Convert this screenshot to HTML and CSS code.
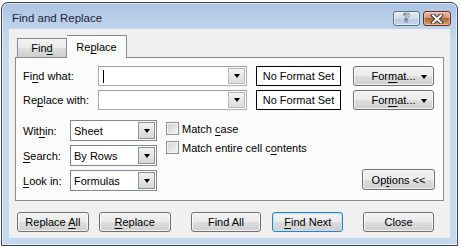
FILE: index.html
```html
<!DOCTYPE html>
<html lang="en">
<head>
    <meta charset="UTF-8">
    <title>Find and Replace</title>
    <link rel="stylesheet" href="styles.css">
</head>
<body>
    <div class="window">
        <div class="titlebar">
            <span class="title">Find and Replace</span>
            <div class="caption-btns">
                <div class="cap help">?</div>
                <div class="cap close">
                    <svg width="14" height="10" viewBox="0 0 14 10">
                        <path d="M3 1.5L11 8.5M11 1.5L3 8.5" stroke="#3a3a3a" stroke-width="4" stroke-linecap="square"/>
                        <path d="M3 1.5L11 8.5M11 1.5L3 8.5" stroke="#fff" stroke-width="2" stroke-linecap="square"/>
                    </svg>
                </div>
            </div>
        </div>

        <div class="client">
            <div class="tabs">
                <div class="tab"><span>Fin<u>d</u></span></div>
                <div class="tab active"><span>Re<u>p</u>lace</span></div>
            </div>

            <div class="panel">
                <div class="find-row">
                    <span class="label wide">Fi<u>n</u>d what:</span>
                    <div class="combo"><span class="caret"></span><span class="combo-arrow"><i class="tri"></i></span></div>
                    <div class="format-box">No Format Set</div>
                    <div class="btn format"><span>For<u>m</u>at...</span><i class="tri"></i></div>
                </div>
                <div class="find-row">
                    <span class="label wide">Re<u>p</u>lace with:</span>
                    <div class="combo"><span class="combo-arrow"><i class="tri"></i></span></div>
                    <div class="format-box">No Format Set</div>
                    <div class="btn format"><span>For<u>m</u>at...</span><i class="tri"></i></div>
                </div>

                <div class="options">
                    <div class="selects">
                        <span class="label">Wit<u>h</u>in:</span>
                        <div class="select"><span>Sheet</span><span class="select-arrow"><i class="tri"></i></span></div>
                        <span class="label"><u>S</u>earch:</span>
                        <div class="select"><span>By Rows</span><span class="select-arrow"><i class="tri"></i></span></div>
                        <span class="label"><u>L</u>ook in:</span>
                        <div class="select"><span>Formulas</span><span class="select-arrow"><i class="tri"></i></span></div>
                    </div>
                    <div class="checks">
                        <div class="check"><span class="box"></span><span>Match <u>c</u>ase</span></div>
                        <div class="check"><span class="box"></span><span>Match entire cell c<u>o</u>ntents</span></div>
                    </div>
                    <div class="btn opt"><span>Op<u>t</u>ions &lt;&lt;</span></div>
                </div>
            </div>

            <div class="actions">
                <div class="btn act"><span>Replace <u>A</u>ll</span></div>
                <div class="btn act"><span><u>R</u>eplace</span></div>
                <div class="btn act gap-l"><span>Find All</span></div>
                <div class="btn act focus"><span><u>F</u>ind Next</span></div>
                <div class="btn act gap-l"><span>Close</span></div>
            </div>
        </div>
    </div>
</body>
</html>
```

FILE: styles.css
```css
* {
    box-sizing: border-box;
}

body {
    margin: 0;
    padding: 2px 0 0 1px;
    background: #fff;
    font-family: 'Liberation Sans', Arial, sans-serif;
    font-size: 11px;
    color: #000;
}

u {
    text-decoration-thickness: 1px;
    text-underline-offset: 2px;
}

.window {
    width: 457px;
    height: 244px;
    border: 1px solid #3b4452;
    border-radius: 7px 7px 0 0;
    background: linear-gradient(#a9c3e1 0px, #bcd2ea 20px, #c4d8ee 40px, #c4d8ee 100%);
    box-shadow: inset 0 0 0 1px rgba(255, 255, 255, 0.55);
    display: flex;
    flex-direction: column;
}

.titlebar {
    height: 26px;
    display: flex;
    justify-content: space-between;
    padding: 8px 6px 0 10px;
}

.title {
    color: #1f1d3d;
    font-size: 11.5px;
    line-height: 14px;
}

.caption-btns {
    display: flex;
    gap: 3px;
}

.cap {
    height: 15px;
    border-radius: 3px;
    display: flex;
    align-items: center;
    justify-content: center;
}

.help {
    width: 27px;
    border: 1px solid #5a6f8e;
    background: linear-gradient(#e4ecf6 0%, #cfdcec 50%, #b5c8e0 51%, #c9d8ea 100%);
    box-shadow: inset 0 0 0 1px rgba(255, 255, 255, 0.5);
    color: #fff;
    font-family: 'DejaVu Sans', sans-serif;
    font-weight: bold;
    font-size: 12px;
    line-height: 13px;
    -webkit-text-stroke: 0.6px #3a4660;
}

.close {
    width: 28px;
    border: 1px solid #6b2c22;
    background: linear-gradient(#e6b9a6 0%, #d29a7f 45%, #a7652f 50%, #b8773d 60%, #d6a077 100%);
    box-shadow: inset 0 0 0 1px rgba(255, 255, 255, 0.35);
}

.client {
    flex: 1;
    margin: 0 7px 7px 7px;
    background: #f0f0f0;
    padding: 6px 6px 0 6px;
}

.tabs {
    display: flex;
    align-items: flex-start;
    height: 22px;
    padding-left: 2px;
    position: relative;
    z-index: 1;
}

.tab {
    width: 50px;
    height: 19px;
    margin-top: 3px;
    border: 1px solid #898c95;
    border-bottom: none;
    background: linear-gradient(#f3f3f3 0%, #ebebeb 50%, #dddddd 51%, #cfcfcf 100%);
    text-align: center;
    line-height: 18px;
}

.tab.active {
    width: 60px;
    height: 23px;
    margin-top: 0;
    border-left: none;
    background: #fbfbfb;
    line-height: 22px;
}

.panel {
    height: 144px;
    border: 1px solid #898c95;
    background: #fbfbfb;
    padding: 8px 8px 0 7px;
}

.find-row {
    display: flex;
    align-items: center;
    height: 20px;
    margin-bottom: 4px;
}

.label {
    white-space: nowrap;
}

.label.wide {
    width: 75px;
}

.combo {
    width: 149px;
    height: 20px;
    border: 1px solid #abadb3;
    border-top-color: #9a9da5;
    background: #fff;
    display: flex;
    align-items: center;
    padding: 1px;
}

.caret {
    width: 1px;
    height: 13px;
    background: #000;
    margin-left: 3px;
}

.combo-arrow {
    margin-left: auto;
    width: 17px;
    height: 16px;
    border: 1px solid #b8b8b8;
    background: linear-gradient(#f4f4f4, #dcdcdc);
    display: flex;
    align-items: center;
    justify-content: center;
}

.tri {
    display: block;
    width: 0;
    height: 0;
    border-left: 3.5px solid transparent;
    border-right: 3.5px solid transparent;
    border-top: 4px solid #000;
}

.format-box {
    width: 85px;
    height: 20px;
    margin-left: 9px;
    border: 1px solid #000;
    background: #fff;
    text-align: center;
    line-height: 18px;
}

.btn {
    height: 20px;
    border: 1px solid #707070;
    border-radius: 3px;
    background: linear-gradient(#f2f2f2 0%, #ebebeb 50%, #dddddd 51%, #cfcfcf 100%);
    box-shadow: inset 0 0 0 1px rgba(255, 255, 255, 0.7);
    display: flex;
    align-items: center;
    justify-content: center;
    line-height: 18px;
}

.btn.format {
    width: 81px;
    margin-left: 12px;
    position: relative;
}

.btn.format .tri {
    position: absolute;
    right: 6px;
    top: 8px;
}

.options {
    display: flex;
    align-items: flex-start;
    margin-top: 10px;
}

.selects {
    display: grid;
    grid-template-columns: 47px 87px;
    row-gap: 4px;
    align-items: center;
}

.select {
    height: 21px;
    border: 1px solid #828790;
    background: #fff;
    display: flex;
    align-items: center;
    padding-left: 3px;
    padding-right: 1px;
}

.select-arrow {
    margin-left: auto;
    width: 17px;
    height: 17px;
    border: 1px solid #8e8f8f;
    background: linear-gradient(#f2f2f2, #d6d6d6);
    display: flex;
    align-items: center;
    justify-content: center;
}

.checks {
    margin-left: 9px;
    padding-top: 2px;
}

.check {
    display: flex;
    align-items: center;
    height: 13px;
    margin-bottom: 6px;
}

.box {
    width: 13px;
    height: 13px;
    border: 1px solid #8e8f8f;
    background: linear-gradient(135deg, #cfcfcf, #f7f7f7);
    box-shadow: inset 0 0 0 1px #f4f4f4;
    margin-right: 3px;
}

.btn.opt {
    width: 73px;
    height: 21px;
    margin-left: auto;
    margin-top: 49px;
}

.actions {
    display: flex;
    margin-top: 11px;
    padding-left: 2px;
}

.btn.act {
    width: 74px;
    margin-right: 10px;
}

.btn.act.gap-l {
    margin-left: 10px;
}

.btn.act:nth-child(3),
.btn.act:nth-child(4),
.btn.act:nth-child(5) {
    width: 73px;
}

.btn.act:nth-child(3) {
    margin-right: 11px;
}

.btn.focus {
    border-color: #3c7fb1;
    box-shadow: inset 0 0 0 1px #b3e6fb;
}
```
